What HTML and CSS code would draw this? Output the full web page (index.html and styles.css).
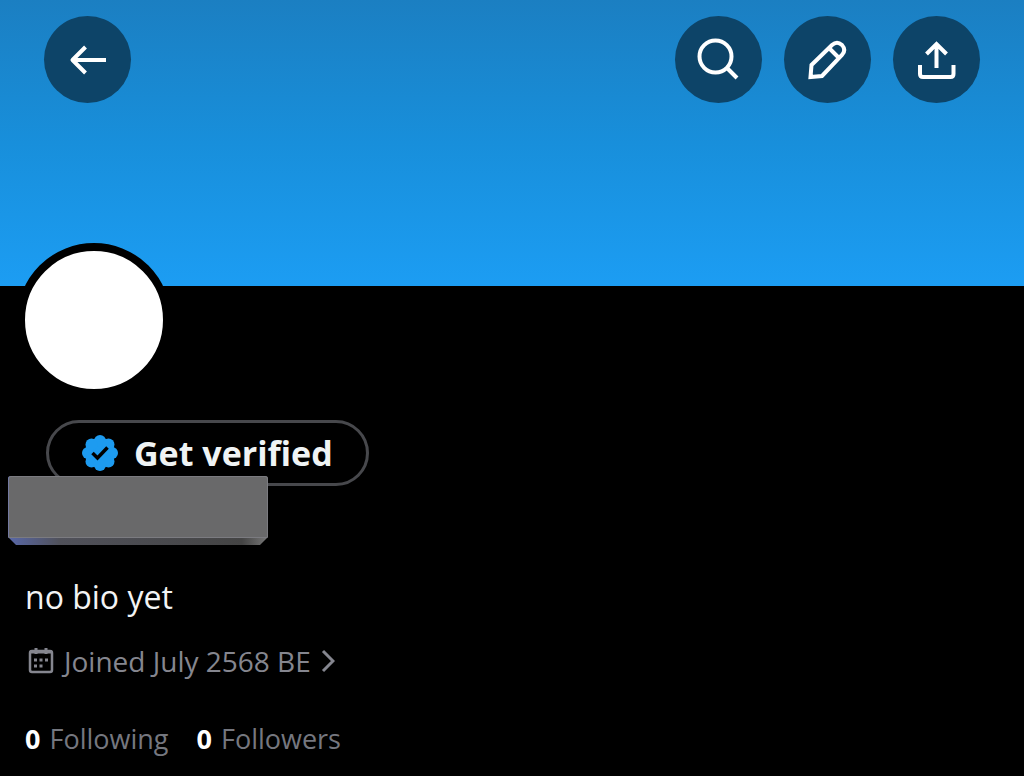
FILE: index.html
```html
<!DOCTYPE html>
<html lang="en">
<head>
  <meta charset="UTF-8" />
  <meta name="viewport" content="width=device-width, initial-scale=1" />
  <title>Profile</title>
  <link rel="stylesheet" href="styles.css">
</head>
<body>

  <header class="banner">
    <button class="round-btn back" type="button" aria-label="Back">
      <svg viewBox="0 0 87 87"><path d="M62 44H28M41.500 31L28.500 44l13 13" stroke-linejoin="round" /></svg>
    </button>
    <button class="round-btn" type="button" aria-label="Search">
      <svg viewBox="0 0 87 87"><circle cx="40.500" cy="40.500" r="16" /><path d="M52 52L62 62" /></svg>
    </button>
    <button class="round-btn" type="button" aria-label="Edit profile">
      <svg viewBox="0 0 87 87"><path d="M26.500 61l1-12L48 29q5-4.500 10 0q4.500 5 0 10L38 60zM45 32l10.500 10.500" /></svg>
    </button>
    <button class="round-btn" type="button" aria-label="Share">
      <svg viewBox="0 0 87 87"><path d="M43.500 52V28M33.500 38l10-10 10 10M27 49v9q0 3 3 3h27.500q3 0 3-3v-9" /></svg>
    </button>
  </header>

  <main class="profile">
    <div class="avatar"></div>
    <button class="verify" type="button">
      <svg class="badge" viewBox="0 0 36 36">
        <g fill="#1d9bf0">
          <circle cx="18" cy="18" r="15" />
          <circle cx="18" cy="6" r="6" />
          <circle cx="26.500" cy="9.500" r="6" />
          <circle cx="30" cy="18" r="6" />
          <circle cx="26.500" cy="26.500" r="6" />
          <circle cx="18" cy="30" r="6" />
          <circle cx="9.500" cy="26.500" r="6" />
          <circle cx="6" cy="18" r="6" />
          <circle cx="9.500" cy="9.500" r="6" />
        </g>
        <path d="M10.500 18l5 5 10-10.500" fill="none" stroke="#000" stroke-width="3.500" />
      </svg>
      Get verified
    </button>
    <div class="name-cover"><div class="name-face"></div></div>

    <p class="bio">no bio yet</p>
    <a class="joined" href="#">
      <svg class="calendar" viewBox="0 0 26 26">
        <rect x="2" y="3" width="22" height="21" rx="2" fill="none" stroke="currentColor" stroke-width="2.500" />
        <path d="M2 4h22M8 0v6M18 0v6" stroke="currentColor" stroke-width="3" />
        <path d="M6 12h3M11.500 12h3M17 12h3M6 18h3M11.500 18h3" stroke="currentColor" stroke-width="3" />
      </svg>
      Joined July 2568 BE
      <svg class="chevron" viewBox="0 0 14 24"><path d="M2 2l10 10L2 22" fill="none" stroke="currentColor" stroke-width="3" /></svg>
    </a>
    <nav class="counts">
      <a href="#"><b>0</b> Following</a>
      <a href="#"><b>0</b> Followers</a>
    </nav>
  </main>

</body>
</html>
```

FILE: styles.css
```css
* { box-sizing: border-box; }
body {
  margin: 0;
  background: #000;
  color: #f2f3f4;
  font-family: "Open Sans", sans-serif;
}
button { font-family: inherit; cursor: pointer; }
a { color: inherit; text-decoration: none; }
svg { display: block; flex: none; }

/* Banner */
.banner {
  display: flex;
  align-items: flex-start;
  gap: 22px;
  height: 286px;
  padding: 16px 44px;
  background: linear-gradient(#1b7fc2, #188fdb 50%, #1c9df3);
}
.round-btn {
  width: 87px;
  height: 87px;
  padding: 0;
  border: 0;
  border-radius: 50%;
  background: #0d4468;
}
.round-btn svg {
  width: 100%;
  fill: none;
  stroke: #fff;
  stroke-width: 4;
}
.back { margin-right: auto; }

/* Profile */
.profile {
  display: flex;
  flex-direction: column;
  align-items: flex-start;
  padding: 0 25px;
}
.avatar {
  width: 154px;
  height: 154px;
  margin: -43px 0 0 -8px;
  border: 8px solid #000;
  border-radius: 50%;
  background: #fff;
}
.verify {
  display: flex;
  align-items: center;
  gap: 16px;
  height: 66px;
  margin: 23px 0 0 21px;
  padding: 0 33px;
  border: 3px solid #47484c;
  border-radius: 33px;
  background: #000;
  color: #eff3f4;
  font-size: 34px;
  font-weight: 700;
}
.badge { width: 36px; height: 36px; }

/* Slab over the name */
.name-cover {
  z-index: 1;
  width: 260px;
  height: 69px;
  margin: -10px 0 0 -17px;
  padding-bottom: 7px;
  border-radius: 3px;
  background: linear-gradient(90deg, #5968a8, #50515a 20%, #444 90%, #777);
  clip-path: polygon(0 0, 100% 0, 100% 61px, 252px 100%, 8px 100%, 0 61px);
}
.name-face {
  height: 100%;
  border: 1px solid #7b7b80;
  border-left-color: #7278a0;
  border-radius: 3px 3px 0 0;
  background: #69696a;
}

.bio {
  margin: 30px 0 0;
  font-size: 32px;
  line-height: 44px;
}
.joined {
  display: flex;
  align-items: center;
  gap: 10px;
  margin-top: 24px;
  padding-left: 3px;
  color: #85868f;
  font-size: 28px;
  line-height: 36px;
}
.calendar { width: 26px; height: 26px; }
.chevron { width: 14px; height: 24px; }
.counts {
  display: flex;
  gap: 28px;
  margin-top: 42px;
  color: #75777f;
  font-size: 27px;
  line-height: 36px;
}
.counts b {
  margin-right: 2px;
  color: #fff;
}
```
